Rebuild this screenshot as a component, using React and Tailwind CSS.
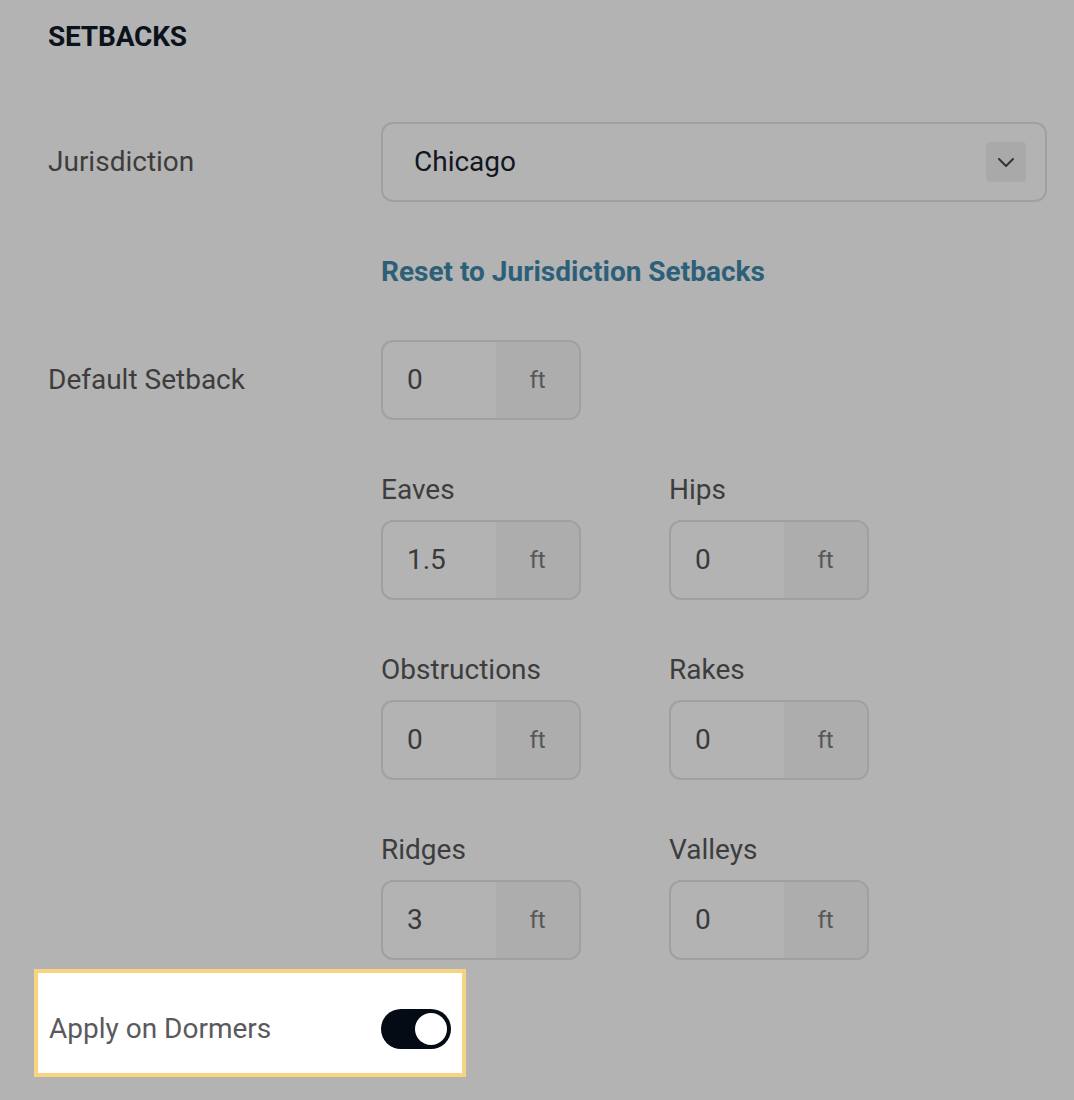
import React from "react";

function UnitInput({ value }) {
  return (
    <div className="flex h-[80px] w-[200px] overflow-hidden rounded-[12px] border-2 border-[#a0a0a0]">
      <div className="flex flex-1 items-center pl-[24px] text-[28px] text-[#3a3a3a]">{value}</div>
      <div className="flex w-[83px] items-center justify-center bg-[#adadad] text-[24px] text-[#585858]">ft</div>
    </div>
  );
}

function Field({ label, value }) {
  return (
    <div className="flex flex-col">
      <div className="mb-[14px] text-[28px] leading-[32px] text-[#3d3d3d]">{label}</div>
      <UnitInput value={value} />
    </div>
  );
}

export default function App() {
  return (
    <div
      className="min-h-[1100px] bg-[#b3b3b3] pl-[48px] pr-[27px] pt-[21px]"
      style={{ fontFamily: "Roboto, 'Noto Sans', sans-serif" }}
    >
      <h2 className="text-[28px] font-bold leading-[32px] tracking-[-0.2px] text-[#0c121c]">SETBACKS</h2>

      <div className="mt-[69px] grid grid-cols-[333px_1fr] items-center">
        <div className="text-[28px] leading-[32px] text-[#3d3d3d]">Jurisdiction</div>
        <div className="flex h-[80px] items-center justify-between rounded-[12px] border-2 border-[#a0a0a0] pl-[31px] pr-[19px]">
          <span className="text-[28px] text-[#11161f]">Chicago</span>
          <span className="flex h-[40px] w-[40px] items-center justify-center rounded-[4px] bg-[#a9a9a9]">
            <svg width="20" height="20" viewBox="0 0 20 20" fill="none" stroke="#333" strokeWidth="2" strokeLinecap="round" strokeLinejoin="round">
              <path d="M3 7l7 7 7-7" />
            </svg>
          </span>
        </div>
      </div>

      <div className="mt-[54px] grid grid-cols-[333px_1fr]">
        <div />
        <div className="text-[28px] font-bold leading-[32px] text-[#2c6078]">Reset to Jurisdiction Setbacks</div>
      </div>

      <div className="mt-[52px] grid grid-cols-[333px_1fr] items-center">
        <div className="text-[28px] leading-[32px] text-[#3d3d3d]">Default Setback</div>
        <UnitInput value="0" />
      </div>

      <div className="mt-[54px] grid grid-cols-[333px_1fr]">
        <div />
        <div className="grid grid-cols-[200px_200px] gap-x-[88px] gap-y-[54px]">
          <Field label="Eaves" value="1.5" />
          <Field label="Hips" value="0" />
          <Field label="Obstructions" value="0" />
          <Field label="Rakes" value="0" />
          <Field label="Ridges" value="3" />
          <Field label="Valleys" value="0" />
        </div>
      </div>

      <div className="ml-[-14px] mt-[9px] flex h-[108px] w-[432px] items-center justify-between border-4 border-[#f8d380] bg-white pl-[11px] pr-[11px] pt-[12px]">
        <span className="text-[28px] leading-[32px] text-[#5a5a5e]">Apply on Dormers</span>
        <span className="flex h-[40px] w-[70px] items-center justify-end rounded-full bg-[#050b15] pr-[4px]">
          <span className="h-[32px] w-[32px] rounded-full bg-white" />
        </span>
      </div>
    </div>
  );
}
